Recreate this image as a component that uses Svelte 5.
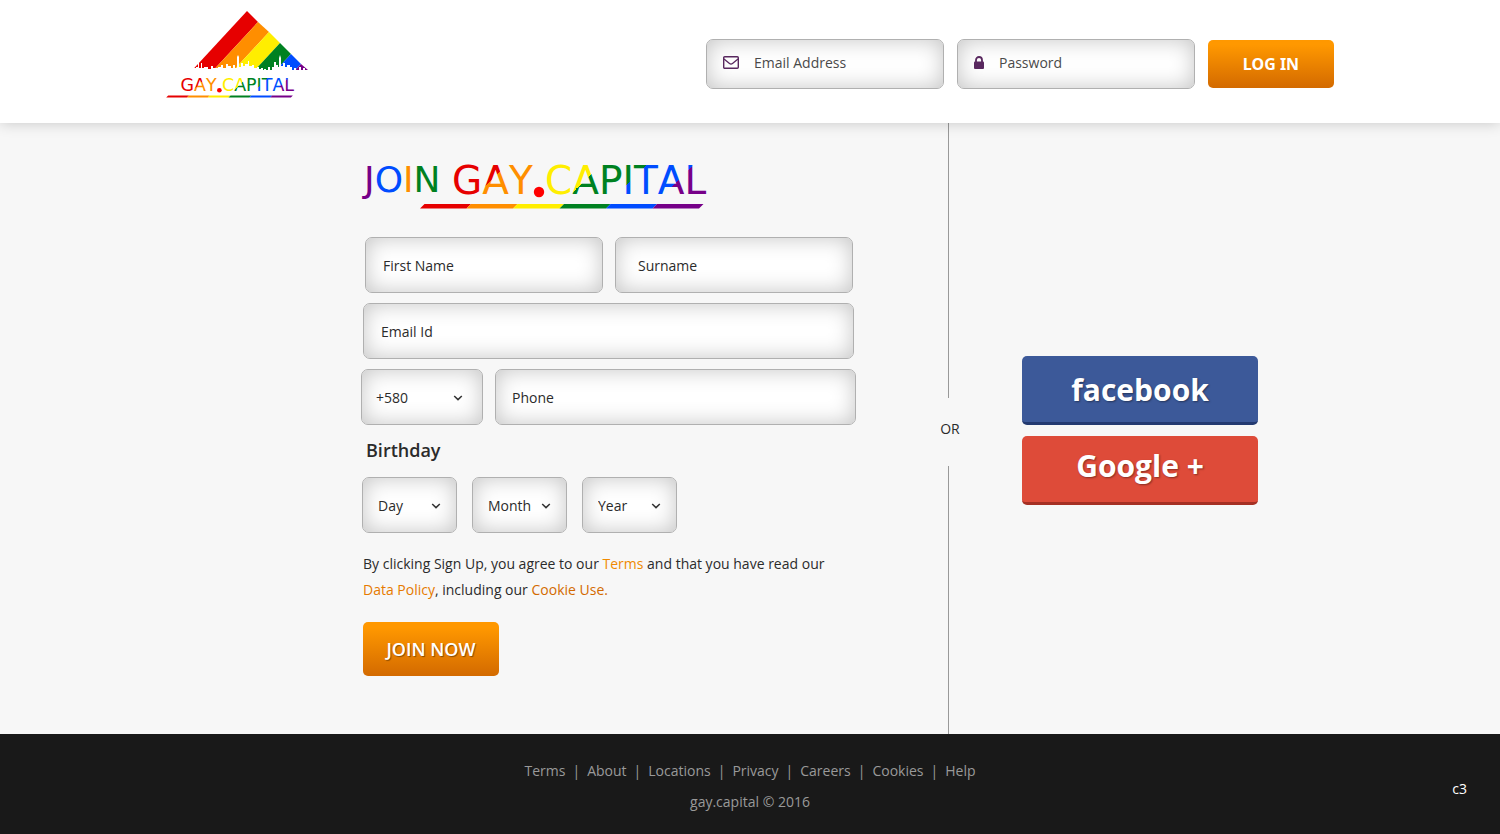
<script>
	const stripes = ["#e60000", "#ff8e00", "#ffee00", "#008121", "#004cff", "#760088"];

	// where each stripe of the triangle starts on its right-hand edge
	const edges = [
		[82, 6],
		[93, 17],
		[104, 27],
		[115, 38],
		[126, 49],
		[136, 59],
		[143, 65],
	];

	const links = ["Terms", "About", "Locations", "Privacy", "Careers", "Cookies", "Help"];
	const days = Array.from({ length: 31 }, (_, i) => i + 1);
	const months = ["January", "February", "March", "April", "May", "June", "July", "August", "September", "October", "November", "December"];
	const years = Array.from({ length: 80 }, (_, i) => 2016 - i);

	function band(i) {
		const [x1, y1] = edges[i];
		const [x2, y2] = edges[i + 1];
		const left = x1 - (65 - y1) * 0.925;
		const right = x2 - (65 - y2) * 0.925;
		return `${x1},${y1} ${x2},${y2} ${right},65 ${left},65`;
	}
</script>

{#snippet wordmark(id)}
	<defs>
		<linearGradient {id} gradientUnits="userSpaceOnUse" x1="52" y1="52" x2="192" y2="192">
			{#each stripes as color, i}
				<stop offset={i / 6} stop-color={color} />
				<stop offset={(i + 1) / 6} stop-color={color} />
			{/each}
		</linearGradient>
	</defs>
	<text x="91" y="34" font-size="39" fill="url(#{id})">GAY</text>
	<circle cx="178" cy="32" r="5.200" fill="#f00" />
	<text x="184" y="34" font-size="39" fill="url(#{id})">CAPITAL</text>
	{#each stripes as color, i}
		<path d="M{59 + i * 46.5} 48.500l4.500-4.500h46.500l-4.500 4.500z" fill={color} />
	{/each}
{/snippet}

{#snippet chevron()}
	<svg class="chevron" width="10" height="6" viewBox="0 0 10 6" aria-hidden="true">
		<path d="M1.200 1l3.800 3.600L8.800 1" fill="none" stroke="#333" stroke-width="1.500" />
	</svg>
{/snippet}

<header>
	<div class="container bar">
		<a class="logo" href="/" aria-label="gay.capital">
			<svg width="145" height="95" viewBox="0 0 145 95">
				{#each stripes as color, i}
					<polygon points={band(i)} fill={color} />
				{/each}
				<path
					fill="#fff"
					d="M26 63h5v-1h2v-4h1v5h2v-5h1v5h2v-1h4v2h3v-3h2v2h5v-1h3v-2h2v3h3v-4h2v2h3v2h2v-3h2v3h2V52l1-2 1 2v10h2v-4h2v3h2v-2h3v-3h1v5h3v-1h2v3h3v-1h2v2h2v-1h2v3h1v-2h2v1h2v-3h2v3h2v-3h2v-5h2v3h2v2h1V53l1-3 1 3v8h2v-3h2v4h2v-2h3v2h2v3h2v-2h2v2h3v-3h2v3h2v-2h2v3h2v2H26z"
				/>
				<g transform="translate(-25.200 70.900) scale(.447)">
					{@render wordmark("small")}
				</g>
			</svg>
		</a>
		<form class="login" onsubmit={(e) => e.preventDefault()}>
			<label class="field">
				<svg width="16" height="13" viewBox="0 0 16 13" aria-hidden="true">
					<rect x=".7" y=".7" width="14.600" height="11.600" rx="1" fill="none" stroke="#59285f" stroke-width="1.400" />
					<path d="M1 3l5.500 4.600q1.500 1.200 3 0L15 3" fill="none" stroke="#59285f" stroke-width="1.300" />
				</svg>
				<input type="email" placeholder="Email Address" aria-label="Email Address" />
			</label>
			<label class="field">
				<svg width="10" height="13" viewBox="0 0 10 13" aria-hidden="true">
					<path d="M2 6V4a3 3 0 0 1 6 0v2" fill="none" stroke="#59285f" stroke-width="1.800" />
					<rect y="5.500" width="10" height="7.500" rx="1" fill="#59285f" />
				</svg>
				<input type="password" placeholder="Password" aria-label="Password" />
			</label>
			<button class="orange">LOG IN</button>
		</form>
	</div>
</header>

<main class="container">
	<form class="join" onsubmit={(e) => e.preventDefault()}>
		<h1 aria-label="Join gay.capital">
			<svg width="350" height="50" viewBox="0 0 350 50">
				<text x="3" y="32" font-size="36">
					<tspan fill="#760088">J</tspan><tspan fill="#004cff">O</tspan><tspan fill="#ff8e00">I</tspan><tspan fill="#008121">N</tspan>
				</text>
				{@render wordmark("large")}
			</svg>
		</h1>
		<div class="row names">
			<input class="box" type="text" placeholder="First Name" aria-label="First Name" />
			<input class="box surname" type="text" placeholder="Surname" aria-label="Surname" />
		</div>
		<div class="row email">
			<input class="box" type="email" placeholder="Email Id" aria-label="Email Id" />
		</div>
		<div class="row">
			<div class="select code">
				<select class="box" aria-label="Country code">
					<option>+580</option>
				</select>
				{@render chevron()}
			</div>
			<input class="box phone" type="tel" placeholder="Phone" aria-label="Phone" />
		</div>
		<h2>Birthday</h2>
		<div class="birthday">
			<div class="select">
				<select class="box" aria-label="Day">
					<option>Day</option>
					{#each days as day}<option>{day}</option>{/each}
				</select>
				{@render chevron()}
			</div>
			<div class="select">
				<select class="box" aria-label="Month">
					<option>Month</option>
					{#each months as month}<option>{month}</option>{/each}
				</select>
				{@render chevron()}
			</div>
			<div class="select">
				<select class="box" aria-label="Year">
					<option>Year</option>
					{#each years as year}<option>{year}</option>{/each}
				</select>
				{@render chevron()}
			</div>
		</div>
		<p>
			By clicking Sign Up, you agree to our <a class="light" href="/terms">Terms</a> and that you have read our
			<a href="/policy">Data Policy</a>, including our <a class="dark" href="/cookies">Cookie Use.</a>
		</p>
		<button class="orange large">JOIN NOW</button>
	</form>

	<div class="divider"><span>OR</span></div>

	<div class="social">
		<button class="facebook">facebook</button>
		<button class="google">Google +</button>
	</div>
</main>

<footer>
	<div class="info">
		<nav>
			{#each links as link, i}
				{#if i > 0}<span>|</span>{/if}
				<a href="/{link.toLowerCase()}">{link}</a>
			{/each}
		</nav>
		<div>gay.capital © 2016</div>
	</div>
	<div class="c3">c3</div>
</footer>

<style>
	:global(body) {
		margin: 0;
		background: #f7f7f7;
		color: #2b2b2b;
		font: 14px "Open Sans", sans-serif;
	}

	* {
		box-sizing: border-box;
	}

	svg {
		display: block;
		overflow: visible;
		font-family: "DejaVu Sans", sans-serif;
		font-kerning: none;
	}

	a {
		text-decoration: none;
	}

	.container {
		max-width: 1170px;
		margin: 0 auto;
	}

	header {
		position: relative;
		background: #fff;
		box-shadow: 0 0 14px rgba(0, 0, 0, 0.2);
	}

	.bar {
		display: flex;
		justify-content: space-between;
		align-items: flex-start;
		padding: 5px 1px 23px 0;
	}

	.login {
		display: flex;
		align-items: center;
		gap: 13px;
		padding-top: 34px;
	}

	.field,
	.box {
		border: 1px solid #b0b0b0;
		border-radius: 7px;
		background: #fff;
		box-shadow: inset 0 0 22px #c4c4c4;
	}

	.field {
		display: flex;
		align-items: center;
		gap: 15px;
		width: 238px;
		height: 50px;
		padding: 0 16px 3px;
	}

	input,
	select,
	button {
		font: inherit;
		color: inherit;
	}

	input::placeholder {
		color: inherit;
		opacity: 1;
	}

	.field input {
		flex: 1;
		min-width: 0;
		padding: 0;
		border: 0;
		background: none;
		color: #4a4a4a;
	}

	button {
		border: 0;
		border-radius: 5px;
		color: #fff;
		cursor: pointer;
	}

	.orange {
		width: 126px;
		height: 48px;
		background: linear-gradient(#ff9800 10%, #d36a00);
		font: 700 16px "Noto Sans", sans-serif;
	}

	.orange.large {
		width: 136px;
		height: 54px;
		margin-left: 2px;
		font: 600 18px "Open Sans", sans-serif;
		text-shadow: 1px 1px 1px rgba(0, 0, 0, 0.4);
	}

	main {
		display: grid;
		grid-template-columns: 770px 30px 1fr;
	}

	.join {
		width: 691px;
		padding: 37px 0 58px 196px;
	}

	h1 {
		margin: 0 0 27px;
		font-weight: 400;
	}

	.row {
		display: flex;
		gap: 12px;
		margin-bottom: 10px;
	}

	.names {
		display: grid;
		grid-template-columns: 1fr 1fr;
		padding: 0 3px 0 4px;
	}

	.email {
		padding: 0 2px;
	}

	.box {
		width: 100%;
		min-width: 0;
		height: 56px;
		padding: 0 17px;
	}

	.surname {
		padding-left: 22px;
	}

	.phone {
		padding-left: 16px;
	}

	.select {
		position: relative;
		flex: none;
		width: 95px;
	}

	.select.code {
		width: 122px;
	}

	select {
		appearance: none;
	}

	select.box {
		padding: 0 0 0 15px;
	}

	.code select.box {
		padding-left: 14px;
	}

	.chevron {
		position: absolute;
		top: 26px;
		right: 16px;
		pointer-events: none;
	}

	.code .chevron {
		right: 20px;
	}

	h2 {
		margin: 13px 5px 15px;
		font-size: 18px;
		font-weight: 600;
		line-height: 24px;
	}

	.birthday {
		display: flex;
		gap: 15px;
		padding-left: 1px;
	}

	p {
		margin: 18px 0 19px 2px;
		line-height: 26px;
	}

	p a {
		color: #e67a00;
	}

	p .light {
		color: #f08a00;
	}

	p .dark {
		color: #d36a00;
	}

	.divider {
		display: flex;
		flex-direction: column;
		align-items: center;
	}

	.divider::before,
	.divider::after {
		content: "";
		flex: 40;
		width: 1px;
		margin-right: 3px;
		background: #999;
	}

	.divider::after {
		flex: 39;
	}

	.divider span {
		padding-bottom: 6px;
		line-height: 62px;
	}

	.social {
		display: flex;
		flex-direction: column;
		align-items: center;
		justify-content: center;
		gap: 11px;
		padding: 4px 20px 0 0;
	}

	.social button {
		width: 236px;
		height: 69px;
		font: 700 30px "Open Sans", sans-serif;
		text-shadow: 1px 1px 2px rgba(0, 0, 0, 0.4);
	}

	.facebook {
		background: #3c5999;
		border-bottom: 3px solid #233a70;
	}

	.google {
		padding-bottom: 8px;
		background: #de4b39;
		border-bottom: 3px solid #a53024;
	}

	footer {
		display: grid;
		grid-template-columns: 1fr auto 1fr;
		align-items: center;
		padding: 21px 33px 17px;
		background: #191919;
		color: #999;
		line-height: 31px;
	}

	.info {
		grid-column: 2;
		text-align: center;
	}

	nav {
		display: flex;
		gap: 7px;
	}

	nav a {
		color: inherit;
	}

	.c3 {
		justify-self: end;
		padding-top: 4px;
		color: #fff;
	}
</style>
